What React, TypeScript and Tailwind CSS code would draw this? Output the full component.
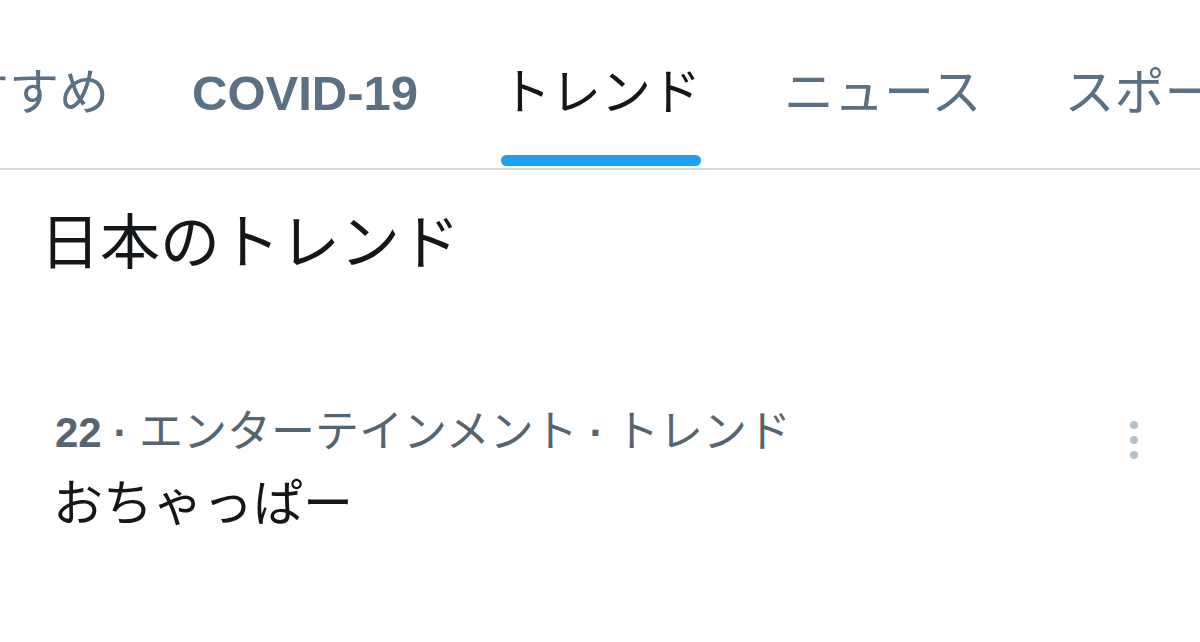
import React from "react";

const tabs = [
  { label: "おすすめ", active: false, bold: false },
  { label: "COVID-19", active: false, bold: true },
  { label: "トレンド", active: true, bold: false },
  { label: "ニュース", active: false, bold: false },
  { label: "スポーツ", active: false, bold: false },
];

export default function App() {
  return (
    <div
      className="w-[1200px] h-[642px] bg-white overflow-hidden"
      style={{ fontFamily: "'Liberation Sans', 'Noto Sans CJK JP', sans-serif" }}
    >
      {/* Tab bar */}
      <div className="h-[170px] border-b-2 border-[#d6dbdf] flex items-end gap-[83px] ml-[-91px] whitespace-nowrap">
        {tabs.map((t) => (
          <div key={t.label} className="flex flex-col items-center shrink-0">
            <span
              className={
                t.bold
                  ? "text-[49px] leading-[56px] font-bold text-[#5b7083]"
                  : t.active
                  ? "text-[50px] leading-[56px] text-[#14171a]"
                  : "text-[50px] leading-[56px] text-[#5b7083]"
              }
            >
              {t.label}
            </span>
            <div
              className={
                "mt-[34px] mb-[2px] h-[11px] rounded-full " +
                (t.active ? "w-[200px] bg-[#1da1f2]" : "w-0 bg-transparent")
              }
            />
          </div>
        ))}
      </div>

      {/* Section heading */}
      <div className="pl-[40px] pt-[38px]">
        <h2 className="text-[60px] leading-[72px] text-[#14171a] font-normal">日本のトレンド</h2>
      </div>

      {/* Trend item */}
      <div className="flex items-start justify-between pl-[55px] pr-[62px] pt-[126px]">
        <div className="flex flex-col">
          <div className="text-[44px] leading-[52px] text-[#56646f] whitespace-nowrap">
            <span className="text-[42px] font-bold">22</span>
            <span className="text-[42px] font-bold"> · </span>
            エンターテインメント
            <span className="text-[42px] font-bold"> · </span>
            トレンド
          </div>
          <div className="text-[50px] leading-[64px] mt-[13px] -ml-[2px] text-[#14171a]">おちゃっぱー</div>
        </div>
        <div className="flex flex-col gap-[7px] pt-[15px]">
          <span className="w-[8px] h-[8px] rounded-full bg-[#b3c0ca]" />
          <span className="w-[8px] h-[8px] rounded-full bg-[#b3c0ca]" />
          <span className="w-[8px] h-[8px] rounded-full bg-[#b3c0ca]" />
        </div>
      </div>
    </div>
  );
}
